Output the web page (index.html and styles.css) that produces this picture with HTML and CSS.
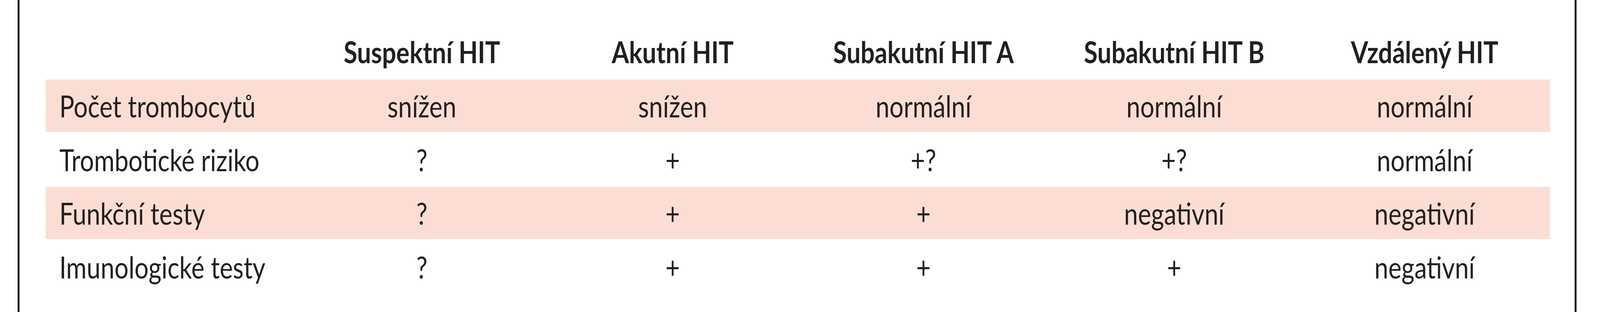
FILE: index.html
```html
<!DOCTYPE html>
<html lang="cs">
<head>
<meta charset="utf-8">
<title>HIT – fáze</title>
<link rel="stylesheet" href="styles.css">
</head>
<body>
<div class="frame">
  <div class="table">
    <div class="row head">
      <div class="cell label"></div>
      <div class="cell">Suspektní HIT</div>
      <div class="cell">Akutní HIT</div>
      <div class="cell">Subakutní HIT A</div>
      <div class="cell">Subakutní HIT B</div>
      <div class="cell">Vzdálený HIT</div>
    </div>
    <div class="row band">
      <div class="cell label">Počet trombocytů</div>
      <div class="cell">snížen</div>
      <div class="cell">snížen</div>
      <div class="cell">normální</div>
      <div class="cell">normální</div>
      <div class="cell">normální</div>
    </div>
    <div class="row">
      <div class="cell label">Trombotické riziko</div>
      <div class="cell">?</div>
      <div class="cell">+</div>
      <div class="cell">+?</div>
      <div class="cell">+?</div>
      <div class="cell">normální</div>
    </div>
    <div class="row band">
      <div class="cell label">Funkční testy</div>
      <div class="cell">?</div>
      <div class="cell">+</div>
      <div class="cell">+</div>
      <div class="cell">negativní</div>
      <div class="cell">negativní</div>
    </div>
    <div class="row">
      <div class="cell label">Imunologické testy</div>
      <div class="cell">?</div>
      <div class="cell">+</div>
      <div class="cell">+</div>
      <div class="cell">+</div>
      <div class="cell">negativní</div>
    </div>
  </div>
</div>
</body>
</html>
```

FILE: styles.css
```css
:root {
  /* one reference pixel horizontally: the layout spans the viewport width */
  --u: calc(100vw / 4945);
  /* the 4945px-wide design shown in a 4096px-wide window */
  --sx: 0.8283;
}

html, body {
  margin: 0;
  padding: 0;
  background: #ffffff;
  overflow: hidden;
}

body {
  font-family: Lato, "Liberation Sans", sans-serif;
  color: #231f20;
}

.frame {
  box-sizing: border-box;
  margin-left: calc(54 * var(--u));
  width: calc(4819 * var(--u));
  height: 800px;
  border-left: 5px solid #231f20;
  border-right: 5px solid #231f20;
}

.table {
  margin-left: calc(81 * var(--u));
  width: calc(4650 * var(--u));
  display: flex;
  flex-direction: column;
}

.row {
  box-sizing: border-box;
  display: grid;
  grid-template-columns: repeat(6, minmax(0, 1fr));
  height: 140px;
  padding-top: 3px;
  font-size: 77px;
  line-height: 137px;
}

.row.head {
  height: 203px;
  padding-top: 86px;
  line-height: 92px;
  font-weight: 700;
}

.row.band {
  height: 135px;
  padding-top: 2px;
  line-height: 133px;
  background: #fcddd3;
  box-shadow: inset 0 3px 0 #fde9e2;
}

.cell {
  text-align: center;
  white-space: nowrap;
  transform: scaleX(var(--sx));
}

.cell.label {
  text-align: left;
  transform-origin: left center;
  padding-left: calc(51 * var(--u));
}
```
